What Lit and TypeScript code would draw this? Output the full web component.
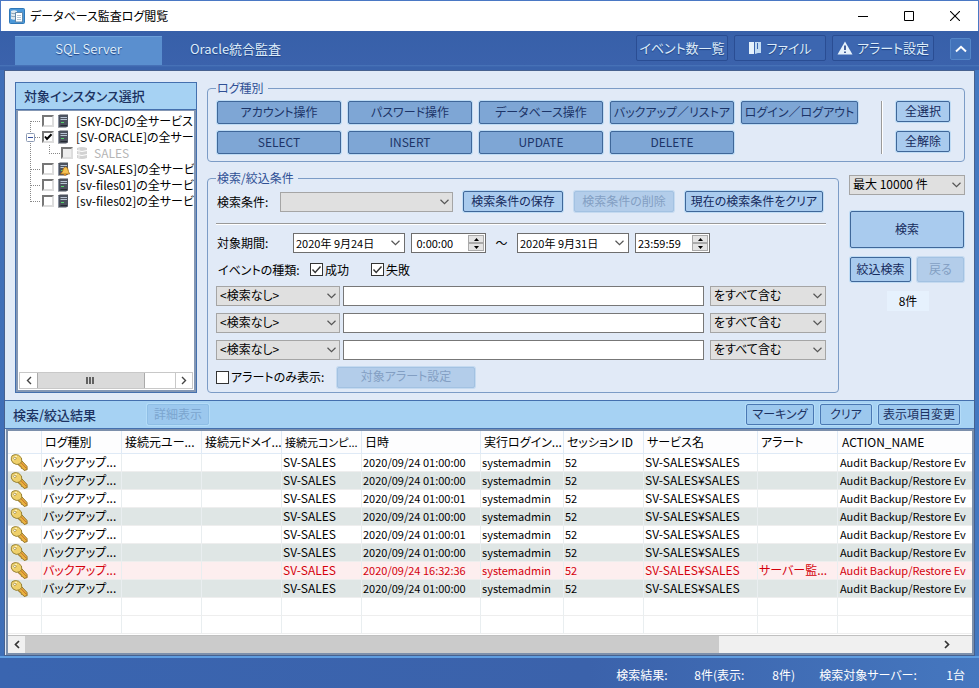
import { LitElement, html, css, svg, nothing } from "lit";
import { customElement, property } from "lit/decorators.js";
import { classMap } from "lit/directives/class-map.js";

type Row = { time: string; alert?: string };

const LOG_TYPES = [
  "アカウント操作", "パスワード操作", "データベース操作", "バックアップ／リストア", "ログイン／ログアウト",
  "SELECT", "INSERT", "UPDATE", "DELETE",
];

const ROWS: Row[] = [
  { time: "2020/09/24 01:00:00" },
  { time: "2020/09/24 01:00:00" },
  { time: "2020/09/24 01:00:01" },
  { time: "2020/09/24 01:00:00" },
  { time: "2020/09/24 01:00:01" },
  { time: "2020/09/24 01:00:00" },
  { time: "2020/09/24 16:32:36", alert: "サーバー監..." },
  { time: "2020/09/24 01:00:00" },
];

const COLUMNS = [
  "", "ログ種別", "接続元ユー...", "接続元ドメイ...", "接続元コンピ...", "日時",
  "実行ログイン...", "セッション ID", "サービス名", "アラート", "ACTION_NAME",
];

const TREE = [
  { name: "[SKY-DC]の全サービス" },
  { name: "[SV-ORACLE]の全サー", checked: true, open: true },
  { name: "SALES", child: true },
  { name: "[SV-SALES]の全サービ", alert: true },
  { name: "[sv-files01]の全サービ" },
  { name: "[sv-files02]の全サービ", last: true },
] as { name: string; checked?: boolean; open?: boolean; child?: boolean; alert?: boolean; last?: boolean }[];

const base = css`
  *, *::before, *::after { box-sizing: border-box; }
  button, input, select {
    font: inherit;
    font-feature-settings: "palt";
    color: inherit;
    margin: 0;
    padding: 0;
    border-radius: 0;
    min-width: 0;
  }
  svg { display: block; flex: none; }
  .check { display: inline-grid; flex: none; }
  .check > * { grid-area: 1 / 1; }
  .check input {
    appearance: none;
    width: 13px;
    height: 13px;
    background: #fff;
    border: 1px solid #333;
  }
  .check svg { pointer-events: none; visibility: hidden; }
  .check input:checked + svg { visibility: visible; }
`;

const chevron = html`<svg class="chev" width="9" height="6" viewBox="0 0 9 6"><path d="M0.5 0.8 4.5 4.6 8.5 0.8" fill="none" stroke="#555" stroke-width="1.2"/></svg>`;

const keyIcon = html`<svg width="18" height="17" viewBox="0 0 18 17">
  <path d="M8 9.500 11 6 17 12.400 17.200 15.600 14.200 16.500 12.800 14.800 11.200 14.200 11 12.400 9 11.800Z" fill="#e8b23f" stroke="#8a6a1c" stroke-width=".9"/>
  <path d="M10.400 8 16.400 14.400" stroke="#c8702a" stroke-width="1"/>
  <path d="M2.200 1.600Q5-.3 8.600 1.200 12.600 3.600 11.800 7.200 10.200 10.800 6.200 10.400 2.200 9.600 1.300 6 1 3.200 2.200 1.600Z" fill="#efd06a" stroke="#8f7a2c" stroke-width=".9"/>
  <path d="M3 6.400Q3.200 3 7 2.200" fill="none" stroke="#fff3b8" stroke-width="1.200"/>
  <ellipse cx="4.800" cy="4.400" rx="1.300" ry="1.100" fill="#fff" stroke="#8f741c" stroke-width=".6"/>
</svg>`;

@customElement("instance-tree")
export class InstanceTree extends LitElement {
  static styles = [base, css`
    :host { display: flex; flex-direction: column; min-width: 0; border: 1px solid #4470ae; }
    h2 {
      margin: 0; height: 27px; padding: 0 8px; background: #a6d2f3; color: #1c3262;
      font-size: 13px; font-weight: 500; line-height: 26px; border-bottom: 1px solid #4470ae; white-space: nowrap;
    }
    .box { flex: 1; display: flex; flex-direction: column; background: #fff; border: 2px solid #8497b4; border-top-width: 1px; overflow: hidden; }
    ul { list-style: none; margin: 0; padding: 2px 0 0; flex: 1; }
    li { display: flex; align-items: center; height: 16px; white-space: nowrap; }
    label { display: flex; align-items: center; color: #000; }
    .check input { width: 12px; height: 12px; border: 2px solid; border-color: #777 #ddd #ddd #777; }
    .icon { margin: 0 6px 0 3px; }
    .off { color: #b5b5b5; }
    .off .check input { background: #eee; }
    .bar { display: grid; grid-template-columns: 17px 110fr 31fr 17px; height: 17px; border: 1px solid #c8c8c8; margin: 0 1px 1px; }
    .bar button { border: 0; background: #fff; display: grid; place-items: center; }
    .thumb { background: #dadada; border: 1px solid #aaa; border-width: 0 1px; display: grid; place-items: center; }
    .bar button:last-child { border-left: 1px solid #c8c8c8; }
  `];

  private connector(n: (typeof TREE)[number], first: boolean) {
    const w = n.child ? 43 : 24;
    return html`<svg width=${w} height="16" viewBox="0 0 ${w} 16">
      <g fill="none" stroke="#888" stroke-dasharray="1 1">
        <path d="M12.5 ${first ? 8 : 0}V${n.last ? 9 : 16}"/>
        ${n.child ? svg`<path d="M31.5 0V9M31 8.5H42"/>` : svg`<path d="M13 8.5H23"/>`}
      </g>
      ${n.open ? svg`<rect x="8.5" y="4.5" width="8" height="8" rx="1" fill="#fff" stroke="#8c9bb5"/><path d="M10 8.5H15" stroke="#3550a0"/>` : nothing}
    </svg>`;
  }

  private icon(n: (typeof TREE)[number]) {
    if (n.child) {
      return html`<svg class="icon" width="12" height="14" viewBox="0 0 12 14"><path d="M1 2Q6 0 11 2V12Q6 14 1 12Z" fill="#d2d2d2"/><path d="M1 4.5Q6 6.5 11 4.5M1 8.5Q6 10.5 11 8.5" stroke="#fff" fill="none"/><path d="M3 2.5V12" stroke="#eee"/></svg>`;
    }
    return html`<svg class="icon" width="13" height="14" viewBox="0 0 13 14">
      <path d="M1 1.5 3 .5H11V12.5L9 13.5H1Z" fill="#4c525e"/><path d="M1.5 2V13" stroke="#8b93a1"/>
      <path d="M3.5 3.5H10M3.5 5.5H10" stroke="#b9c4d4"/><rect x="4" y="8" width="3" height="1" fill="#56d46b"/><path d="M3.5 11.5H10" stroke="#252932"/>
      ${n.alert ? svg`<path d="M3.5 12 5.5 9.500Q6 5 8.500 5T11.500 9.500L12.600 12Z" fill="#f6c251" stroke="#a46a17" stroke-width=".8"/><circle cx="8" cy="12.600" r="1.200" fill="#d98b22"/>` : nothing}
    </svg>`;
  }

  render() {
    return html`
      <h2>対象インスタンス選択</h2>
      <div class="box">
        <ul>
          ${TREE.map((n, i) => html`<li>
            ${this.connector(n, i === 0)}
            <label class=${classMap({ off: !!n.child })}>
              <span class="check">
                <input type="checkbox" .checked=${!!n.checked} ?disabled=${!!n.child}>
                <svg width="12" height="12" viewBox="0 0 12 12"><path d="M3 5.5 5 8 9.5 3.2" fill="none" stroke="#000" stroke-width="2"/></svg>
              </span>
              ${this.icon(n)}<span>${n.name}</span>
            </label>
          </li>`)}
        </ul>
        <div class="bar">
          <button aria-label="左へ"><svg width="6" height="9" viewBox="0 0 6 9"><path d="M5 1 1.5 4.5 5 8" fill="none" stroke="#444" stroke-width="1.4"/></svg></button>
          <div class="thumb"><svg width="9" height="7" viewBox="0 0 9 7"><path d="M1 0V7M4 0V7M7 0V7" stroke="#444" stroke-width="1.6"/></svg></div>
          <div></div>
          <button aria-label="右へ"><svg width="6" height="9" viewBox="0 0 6 9"><path d="M1 1 4.5 4.5 1 8" fill="none" stroke="#444" stroke-width="1.4"/></svg></button>
        </div>
      </div>`;
  }
}

@customElement("result-grid")
export class ResultGrid extends LitElement {
  @property({ attribute: false }) rows: Row[] = [];

  static styles = [base, css`
    :host { display: flex; flex-direction: column; background: #fff; border: 2px solid #7c8fab; overflow: hidden; min-width: 0; }
    .view { flex: 1 1 0; min-height: 204px; overflow: hidden; }
    table { width: 100%; table-layout: fixed; border-collapse: separate; border-spacing: 0; color: #000; }
    .c0 { width: 34px; }
    .c5 { width: 119px; }
    .c6 { width: 83px; }
    .c8 { width: 114px; }
    .c1, .c2, .c3, .c4, .c7, .c9 { width: 80px; }
    th, td {
      overflow: hidden; white-space: nowrap; text-align: left; font-weight: 400;
      border-right: 1px solid #e9eef0;
    }
    th { height: 23px; padding: 0 0 0 3px; background: #fdfdfe; line-height: 20px; border-bottom: 1px solid #dfeaf6; border-right-color: #dfeaf6; }
    td { height: 18px; padding: 0 0 1px 1px; line-height: 16px; border-bottom: 1px solid #eeeeee; }
    td:first-child { padding: 0 0 0 2px; }
    th:last-child, td:last-child { border-right: 0; padding-left: 4px; }
    td:last-child { padding-left: 2px; }
    tbody tr:nth-child(even) td { background: #dfe6e5; }
    tbody tr.empty td { background: #fff; }
    tbody tr.alert td { background: #fdeeef; color: #d4000c; }
    .small { font-size: 11px; }
    .bar { display: grid; grid-template-columns: 17px 695fr 219fr 17px 17px; height: 18px; background: #f0f0f0; border-top: 1px solid #c0c0c0; }
    .bar button { border: 0; background: none; display: grid; place-items: center; }
    .thumb { background: #cbcbcb; }
  `];

  render() {
    return html`
      <div class="view">
        <table>
          <colgroup>${COLUMNS.map((_, i) => html`<col class="c${i}">`)}</colgroup>
          <thead><tr>${COLUMNS.map((c) => html`<th scope="col" class=${classMap({ small: c.startsWith("接続元コン") })}>${c}</th>`)}</tr></thead>
          <tbody>
            ${this.rows.map((r) => html`<tr class=${classMap({ alert: !!r.alert })}>
              <td>${keyIcon}</td><td>バックアップ...</td><td></td><td></td><td>SV-SALES</td>
              <td class="small">${r.time}</td><td class="small">systemadmin</td><td class="small">52</td>
              <td>SV-SALES¥SALES</td><td>${r.alert ?? ""}</td><td class="small">Audit Backup/Restore Ev</td>
            </tr>`)}
            ${[0, 1].map(() => html`<tr class="empty">${COLUMNS.map(() => html`<td></td>`)}</tr>`)}
          </tbody>
        </table>
      </div>
      <div class="bar">
        <button aria-label="左へスクロール"><svg width="6" height="9" viewBox="0 0 6 9"><path d="M5 1 1.5 4.5 5 8" fill="none" stroke="#333" stroke-width="1.7"/></svg></button>
        <div class="thumb"></div><div></div>
        <button aria-label="右へスクロール"><svg width="6" height="9" viewBox="0 0 6 9"><path d="M1 1 4.5 4.5 1 8" fill="none" stroke="#333" stroke-width="1.7"/></svg></button>
      </div>`;
  }
}

@customElement("app-root")
export class AppRoot extends LitElement {
  static styles = [base, css`
    :host {
      display: flex; flex-direction: column; min-height: 100vh; box-sizing: border-box;
      font: 12px/16px "Noto Sans CJK JP", "Noto Sans", sans-serif;
      font-feature-settings: "palt";
      color: #000;
      border-top: 1px solid #4a78c4;
      background: linear-gradient(90deg, #3f6fb8, #355ea9 50%, #4378c0);
    }

    .title { display: flex; align-items: center; height: 30px; padding-left: 8px; background: #fff; border: 1px solid #4a78c4; border-width: 0 1px; }
    .title h1 { flex: 1; margin: 0 0 0 5px; font-size: 12px; font-weight: 400; }
    .title button { width: 46px; height: 29px; border: 0; background: none; display: grid; place-items: center; }

    nav { display: flex; align-items: flex-start; height: 39px; padding: 4px 8px 0 15px; background: linear-gradient(#3760a9, #3b62ac 34px, #4a76ba 34px, #3a63ac 36px); color: #dcecfa; }
    nav a { margin-top: 1px; height: 29px; width: 147px; font-size: 13px; line-height: 26px; text-align: center; color: inherit; text-decoration: none; text-shadow: 0 1px 1px #1d3f80; }
    nav a.on { background: #5a8fcf; box-shadow: inset 0 1px 0 #6c9fd9; }
    nav .gap { flex: 1; }
    nav button { display: flex; align-items: center; justify-content: center; gap: 4px; height: 26px; width: 92px; margin-right: 6px; background: #3c66b0; border: 1px solid #2a4d93; border-radius: 2px; font-size: 13px; line-height: 24px; white-space: nowrap; text-shadow: 0 1px 1px #1d3f80; }
    nav button.wide { width: 102px; margin-right: 16px; }
    nav button.up { width: 21px; height: 22px; margin: 3px 0 0; background: #4373ba; border-color: #5486c8; }

    .frame { flex: 1; display: flex; flex-direction: column; margin: 0 4px; border: 1px solid #47618f; background: #e1eaf7; }
    .upper { display: grid; grid-template-columns: 182px minmax(0, 1fr); gap: 10px; padding: 11px 9px 7px 10px; }
    .right { display: flex; flex-direction: column; gap: 10px; }
    .lower { display: grid; grid-template-columns: minmax(0, 1fr) 116px; gap: 10px; }

    fieldset { margin: 0; min-width: 0; border: 1px solid #7c9cc6; border-radius: 4px; }
    legend { padding: 0 4px 0 1px; line-height: 12px; color: #2f5095; }
    .types { padding: 7px 14px 7px 8px; }
    .types-row { display: flex; align-items: flex-start; }
    .type-grid { flex: 1; display: grid; grid-template-columns: repeat(4, 124fr) 117fr; gap: 7px; padding-left: 1px; }
    .rule { width: 2px; align-self: stretch; border-left: 1px solid #9a9a9a; border-right: 1px solid #fff; margin: 0 13px 0 23px; }
    .picks { display: grid; gap: 9px; width: 54px; }

    .btn { height: 21px; padding: 0 0 2px; background: #a9cbee; border: 1px solid #3f6799; border-radius: 2px; box-shadow: 0 0 0 1px #bfdcf5; color: #152a5c; line-height: 16px; white-space: nowrap; }
    .btn.type { height: 23px; background: #7ea6d5; color: #1c3467; }
    .btn:disabled { background: #b3cdea; border-color: #a3c2e2; box-shadow: 0 0 0 1px #c5daf0; color: #839fc3; }

    .cond { display: flex; flex-direction: column; padding: 7px 12px 4px 8px; }
    .line { display: flex; align-items: center; }
    .head { height: 22px; }
    .head .cap { width: 64px; }
    .head .sel { flex: 0 1 173px; margin-right: 10px; }
    .head .btn { flex: 0 0 100px; align-self: flex-start; margin-right: 11px; }
    .head .btn.long { flex-basis: 138px; margin-right: 0; }
    hr { margin: 10px 0 8px; width: 100%; border: 0; border-top: 1px solid #999; border-bottom: 1px solid #fff; }
    .period { height: 20px; }
    .period .cap { width: 77px; }
    .cap { padding-left: 1px; white-space: nowrap; }
    .date { display: flex; align-items: center; width: 112px; height: 20px; background: #fff; border: 1px solid #6e6e6e; }
    .date input, .time input { flex: 1; width: 0; border: 0; background: none; padding: 0 0 1px 2px; font-size: 11px; line-height: 16px; outline: 0; }
    .date button { border: 0; background: none; padding: 0 4px; }
    .time { display: flex; align-items: center; width: 75px; height: 20px; margin-left: 6px; background: #fff; border: 1px solid #6e6e6e; }
    .spin { display: grid; width: 16px; margin-right: 1px; }
    .spin button { display: grid; place-items: center; height: 8px; background: #e4e4e4; border: 1px solid #aaa; }
    .tilde { width: 31px; text-align: center; }
    .kinds { height: 33px; }
    .kinds .cap { width: 94px; padding-left: 2px; }
    .kinds label { width: 61px; }
    .opt { display: flex; align-items: center; gap: 2px; white-space: nowrap; }

    .filters { display: grid; grid-template-columns: 124px minmax(0, 1fr) 116px; gap: 7px 0; }
    .filters input { height: 20px; margin: 0 6px 0 3px; padding: 0 4px; background: #fff; border: 1px solid #777; }
    .sel { display: grid; align-items: center; height: 20px; }
    .sel > * { grid-area: 1 / 1; }
    .sel select { appearance: none; width: 100%; height: 20px; padding: 0 18px 2px 3px; line-height: 16px; background: #e0e0e0; border: 1px solid #a5a5a5; }
    .sel .chev { justify-self: end; margin-right: 4px; pointer-events: none; }
    .foot { height: 22px; margin-top: 6px; }
    .foot .opt { width: 121px; }
    .foot .btn { width: 138px; }

    aside { padding-top: 3px; }
    .search { display: block; width: calc(100% - 2px); height: 37px; margin: 16px 1px 9px; }
    .pair { display: grid; grid-template-columns: 61fr 47fr; gap: 6px; margin: 0 1px; }
    .pair .btn { height: 25px; }
    .count { width: 42px; margin: 9px 0 0 38px; line-height: 20px; text-align: center; background: #e6f1fd; }

    .results { display: flex; align-items: center; gap: 6px; height: 29px; padding: 0 14px 0 8px; background: #a6d2f3; border: 1px solid #4470ae; border-width: 1px 0; }
    .results h2 { margin: 0; width: 128px; font-size: 13px; font-weight: 500; line-height: 27px; color: #1c3262; }
    .results .gap { flex: 1; }
    .results button { height: 21px; padding: 0 0 1px; width: 82px; background: #9cc8ee; border: 1px solid #4a78b3; border-radius: 2px; color: #1c3262; line-height: 16px; box-shadow: 0 0 0 1px #b4dcf8; }
    .results .w1 { width: 68px; }
    .results .w2 { width: 52px; }
    .results .detail { width: 62px; border-color: #8fbfe6; color: #7ba5cf; }
    result-grid { flex: 1; margin: 0 0 0 1px; }

    footer { display: flex; justify-content: flex-end; align-items: center; height: 32px; padding: 4px 14px 0 0; border-top: 2px solid #5f9de0; color: #fff; white-space: nowrap; background: linear-gradient(90deg, #3a65b0, #3b62ab 60%, #4577bf); }
    footer span { min-width: 78px; }
    footer .paren { min-width: 47px; }
    footer .target { min-width: 127px; }
    footer .last { min-width: 0; }
  `];

  private select(label: string, value: string) {
    return html`<span class="sel"><select aria-label=${label}><option>${value}</option></select>${chevron}</span>`;
  }

  private date(label: string, value: string) {
    return html`<span class="date"><input type="text" aria-label=${label} .value=${value}><button aria-label="カレンダー">${chevron}</button></span>`;
  }

  private time(label: string, value: string) {
    return html`<span class="time"><input type="text" aria-label=${label} .value=${value}>
      <span class="spin">
        <button aria-label="増やす"><svg width="5" height="3" viewBox="0 0 5 3"><path d="M0 3 2.5 0 5 3Z"/></svg></button>
        <button aria-label="減らす"><svg width="5" height="3" viewBox="0 0 5 3"><path d="M0 0 2.5 3 5 0Z"/></svg></button>
      </span></span>`;
  }

  private check(label: string, checked: boolean) {
    return html`<label class="opt"><span class="check"><input type="checkbox" .checked=${checked}><svg width="13" height="13" viewBox="0 0 13 13"><path d="M2.5 6.5 5.2 9.5 10.5 3.5" fill="none" stroke="#333" stroke-width="1.4"/></svg></span>${label}</label>`;
  }

  render() {
    return html`
      <header class="title">
        <svg width="16" height="16" viewBox="0 0 16 16"><rect x=".5" y=".5" width="15" height="15" rx="1" fill="#4c98d8" stroke="#2f78b8"/><path d="M2 3Q5 1.500 8 3V11Q5 12.500 2 11Z" fill="#dfe9f0"/><path d="M2 5Q4 6 6 5.500M2 8Q4 9 6 8.500" fill="none" stroke="#8fa6b8"/><path d="M6.500 4.500H13.500V14H6.500Z" fill="#fff" stroke="#5f86a8"/><path d="M8 7.500H12M8 9.500H12M8 11.500H12" stroke="#b4c6d4"/></svg>
        <h1>データベース監査ログ閲覧</h1>
        <button aria-label="最小化"><svg width="10" height="10" viewBox="0 0 10 10"><path d="M0 5.5H10" stroke="#000"/></svg></button>
        <button aria-label="最大化"><svg width="10" height="10" viewBox="0 0 10 10"><path d="M.5.5H9.500V9.500H.5Z" fill="none" stroke="#000"/></svg></button>
        <button aria-label="閉じる"><svg width="10" height="10" viewBox="0 0 10 10"><path d="M0 0 10 10M10 0 0 10" stroke="#000" stroke-width="1.1"/></svg></button>
      </header>

      <nav>
        <a class="on" href="#sqlserver">SQL Server</a>
        <a href="#oracle">Oracle統合監査</a>
        <span class="gap"></span>
        <button>イベント数一覧</button>
        <button><svg width="14" height="14" viewBox="0 0 14 14"><path d="M1 1H6V13H1Z" fill="#e6f2fc"/><path d="M7 1H13V12H10L7 13Z" fill="#c3dcf3"/><path d="M9.500 2V8" stroke="#3c66b0"/></svg>ファイル</button>
        <button class="wide"><svg width="16" height="14" viewBox="0 0 16 14"><path d="M8 .5 15.500 13.500H.5Z" fill="#e6f2fc"/><path d="M8 4.500V9M8 10.500V12" stroke="#28488c" stroke-width="1.700"/></svg>アラート設定</button>
        <button class="up" aria-label="折りたたむ"><svg width="12" height="8" viewBox="0 0 12 8"><path d="M1 6.500 6 1.800 11 6.500" fill="none" stroke="#fff" stroke-width="2"/></svg></button>
      </nav>

      <main class="frame">
        <section class="upper">
          <instance-tree></instance-tree>
          <div class="right">
            <fieldset class="types">
              <legend>ログ種別</legend>
              <div class="types-row">
                <div class="type-grid">${LOG_TYPES.map((t) => html`<button class="btn type">${t}</button>`)}</div>
                <span class="rule"></span>
                <div class="picks"><button class="btn">全選択</button><button class="btn">全解除</button></div>
              </div>
            </fieldset>
            <div class="lower">
              <fieldset class="cond">
                <legend>検索/絞込条件</legend>
                <div class="line head">
                  <span class="cap">検索条件:</span>
                  ${this.select("検索条件", "")}
                  <button class="btn">検索条件の保存</button>
                  <button class="btn" disabled>検索条件の削除</button>
                  <button class="btn long">現在の検索条件をクリア</button>
                </div>
                <hr>
                <div class="line period">
                  <span class="cap">対象期間:</span>
                  ${this.date("開始日", "2020年 9月24日")}${this.time("開始時刻", " 0:00:00")}
                  <span class="tilde">～</span>
                  ${this.date("終了日", "2020年 9月31日")}${this.time("終了時刻", "23:59:59")}
                </div>
                <div class="line kinds">
                  <span class="cap">イベントの種類:</span>
                  ${this.check("成功", true)}${this.check("失敗", true)}
                </div>
                <div class="filters">
                  ${[1, 2, 3].map((n) => html`${this.select(`項目${n}`, "<検索なし>")}<input type="text" aria-label="検索語${n}">${this.select(`一致条件${n}`, "をすべて含む")}`)}
                </div>
                <div class="line foot">
                  ${this.check("アラートのみ表示:", false)}
                  <button class="btn" disabled>対象アラート設定</button>
                </div>
              </fieldset>
              <aside>
                ${this.select("最大件数", "最大 10000 件")}
                <button class="btn search">検索</button>
                <div class="pair"><button class="btn">絞込検索</button><button class="btn" disabled>戻る</button></div>
                <div class="count">8件</div>
              </aside>
            </div>
          </div>
        </section>

        <section class="results">
          <h2>検索/絞込結果</h2>
          <button class="detail" disabled>詳細表示</button>
          <span class="gap"></span>
          <button class="w1">マーキング</button>
          <button class="w2">クリア</button>
          <button>表示項目変更</button>
        </section>
        <result-grid .rows=${ROWS}></result-grid>
      </main>

      <footer>
        <span>検索結果:</span><span>8件(表示:</span><span class="paren">8件)</span><span class="target">検索対象サーバー:</span><span class="last">1台</span>
      </footer>`;
  }
}
